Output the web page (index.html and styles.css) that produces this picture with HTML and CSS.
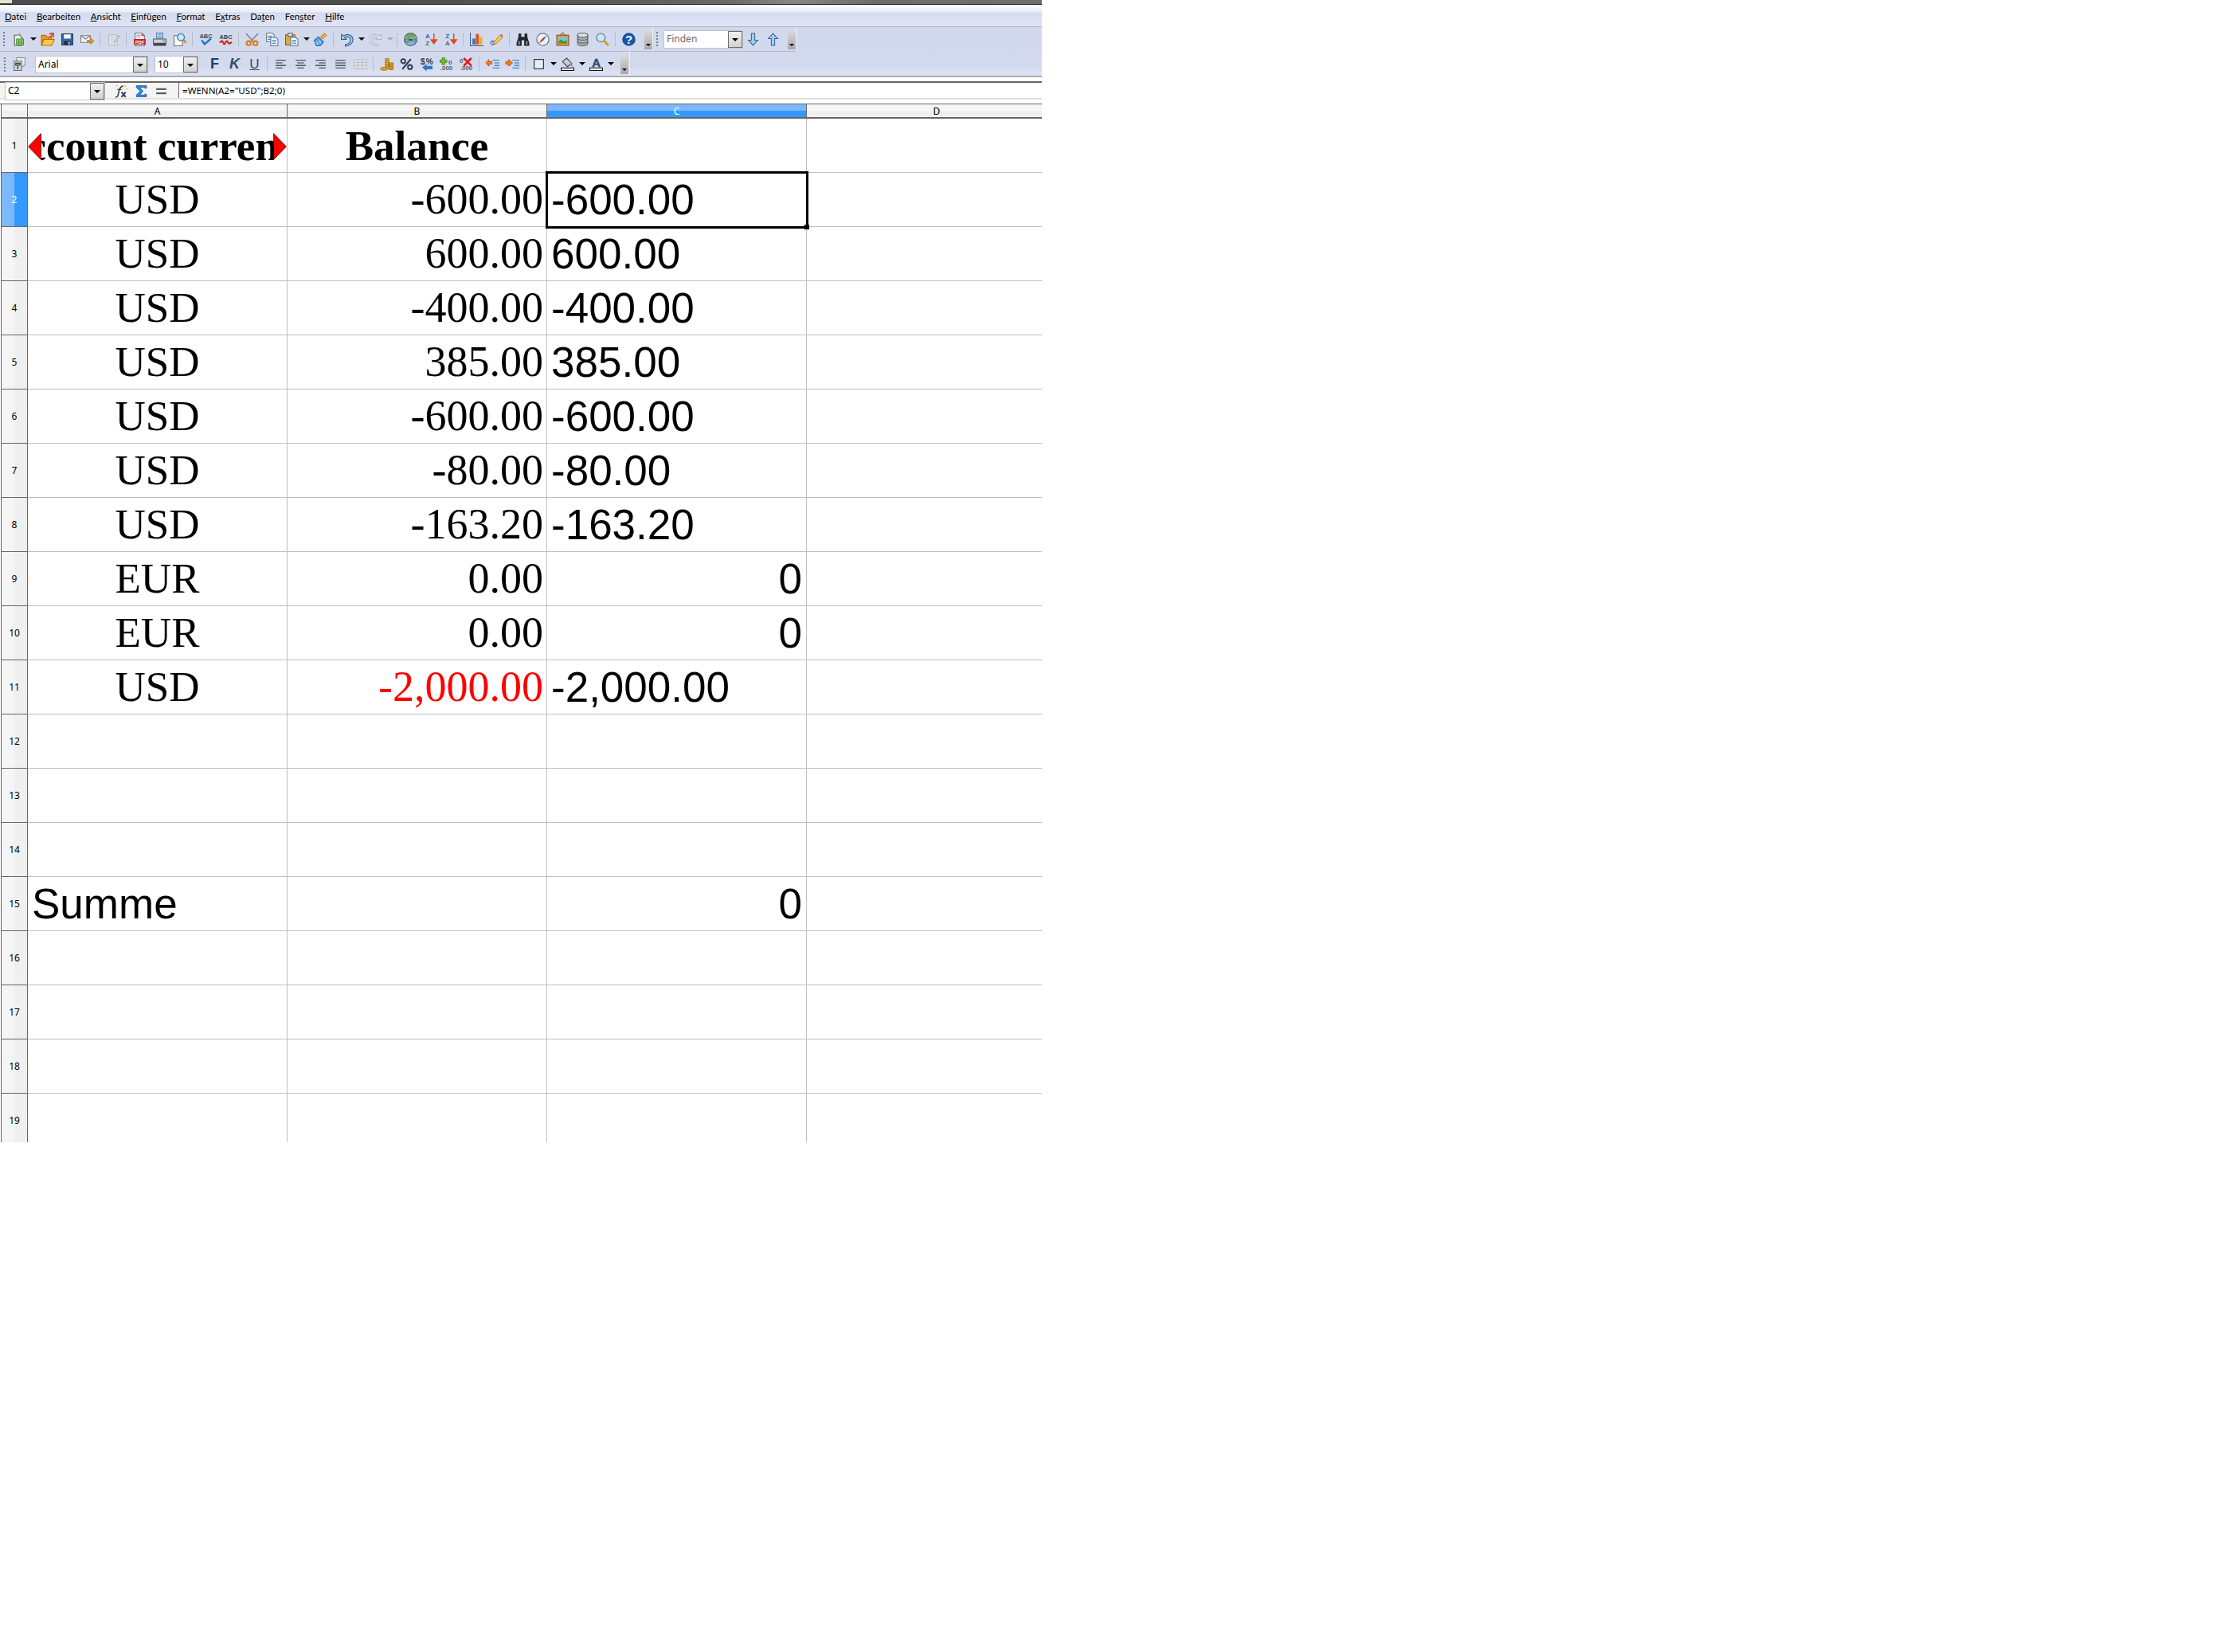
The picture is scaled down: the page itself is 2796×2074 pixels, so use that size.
FILE: index.html
```html
<!DOCTYPE html>
<html lang="de">
<head>
<meta charset="utf-8">
<title>Calc</title>
<link rel="stylesheet" href="styles.css">
</head>
<body>
<div class="app">
  <div class="titlebar"><span class="title-icon"></span></div>
  <div class="menu">
    <span><u>D</u>atei</span><span><u>B</u>earbeiten</span><span><u>A</u>nsicht</span><span><u>E</u>infügen</span><span><u>F</u>ormat</span><span>E<u>x</u>tras</span><span>Da<u>t</u>en</span><span>Fen<u>s</u>ter</span><span><u>H</u>ilfe</span>
  </div>
  <div class="toolbars">
    <div class="tb-row">
      <div class="tb-group">
        <i class="grip"></i>
        <b class="tool"><svg class="ic" viewBox="0 0 16 16"><path d="M3 3h6l3 3v9H3z" fill="#f2f2ee" stroke="#555"/><path d="M5.5 7.500h8v7h-8z" fill="#dff2b8" stroke="#2f8a1c"/><path d="M8.200 7.500v7M10.800 7.500v7M5.500 9.800h8M5.500 12.200h8" stroke="#2f8a1c" fill="none"/><path d="M4 3l5-2.500 3 1.500-5 2z" fill="#9fb59a"/></svg></b>
        <b class="drop"></b>
        <b class="tool"><svg class="ic" viewBox="0 0 16 16"><path d="M1 3h5l1 2h6v3H4l-3 7z" fill="#e89a20" stroke="#a8620e"/><path d="M4 8h12l-3 7H1z" fill="#fcc94e" stroke="#b06e10"/><path d="M9 6l4-4h-3l1-2h5v5l-2 1V3l-4 4z" fill="#e2502a"/></svg></b>
        <b class="tool"><svg class="ic" viewBox="0 0 16 16"><path d="M1.500 1.500h13v13h-13z" fill="#3a6a9e" stroke="#1d3a5c"/><path d="M4 2h8v5H4z" fill="#f4f7fb"/><path d="M4 10h8v4.500H4z" fill="#16304f"/><path d="M9 11h2v3H9z" fill="#b8c8da"/></svg></b>
        <b class="tool"><svg class="ic" viewBox="0 0 16 16"><path d="M.5 3.500h11v8H.5z" fill="#f6f6f6" stroke="#7a7a7a"/><path d="M.5 3.500l5.500 4 5.500-4" fill="none" stroke="#7a7a7a"/><path d="M8 9h4V6.500L16 10l-4 3.500V11H8z" fill="#f0a020" stroke="#a8620e" stroke-width=".7"/></svg></b>
        <i class="sep"></i>
        <b class="tool"><svg class="ic" viewBox="0 0 16 16"><path d="M2.500 2.500h8l2 2v10h-10z" fill="#e4e6ec" stroke="#b4b7c0"/><path d="M4.500 6h5M4.500 8.500h4M4.500 11h3" stroke="#c2c5cc"/><path d="M9 10l5-7 1.500 1-5 7-2 1z" fill="#d0d2d8" stroke="#b4b7c0"/></svg></b>
        <i class="sep"></i>
        <b class="tool"><svg class="ic" viewBox="0 0 16 16"><path d="M2.500.5h8l3 3v12h-11z" fill="#f4f6fa" stroke="#5f7796"/><path d="M10 .5l3.500 3.500H10z" fill="#d8402a"/><path d="M4 3h5M4 5h5" stroke="#8da0b8"/><rect x="1" y="7.500" width="14" height="6.500" fill="#c8201c"/><text x="8" y="13" class="ict pdf">PDF</text></svg></b>
        <b class="tool"><svg class="ic" viewBox="0 0 16 16"><path d="M4.500 .5h7v6h-7z" fill="#eef3f9" stroke="#2f6ca8"/><path d="M6 2.500h4M6 4.500h4" stroke="#2f6ca8"/><path d="M.5 7.500h15v5H.5z" fill="#cfd2d6" stroke="#55585c"/><path d="M.5 12.500h15v3H.5z" fill="#3c3f43"/><path d="M12 9h2v1.500h-2z" fill="#4cb02a"/></svg></b>
        <b class="tool"><svg class="ic" viewBox="0 0 16 16"><path d="M1.500 3.500h7l3 3v9h-10z" fill="#fbfbfb" stroke="#707070"/><circle cx="9.500" cy="5.500" r="4.200" fill="#cfe6f7" stroke="#3e7fb4" stroke-width="1.200"/><path d="M12.500 8.500l3 3.500" stroke="#c88a1e" stroke-width="2.400"/></svg></b>
        <i class="sep"></i>
        <b class="tool"><svg class="ic" viewBox="0 0 16 16"><text x="8" y="6.500" class="ict abc">ABC</text><path d="M3 9l3.500 4.500L14 7" fill="none" stroke="#2a78c8" stroke-width="2.400"/></svg></b>
        <b class="tool"><svg class="ic" viewBox="0 0 16 16"><text x="8" y="7.500" class="ict abc">ABC</text><path d="M1 12c2-3 3-3 4 0s2 1 3-1 2-1 3 1 3 0 4-1" fill="none" stroke="#d8201c" stroke-width="2"/></svg></b>
        <i class="sep"></i>
        <b class="tool"><svg class="ic" viewBox="0 0 16 16"><path d="M1 1l9 10M15 1L6 11" stroke="#8a8e94" stroke-width="1.600"/><circle cx="4" cy="12.500" r="2.500" fill="none" stroke="#e07a18" stroke-width="2"/><circle cx="12" cy="12.500" r="2.500" fill="none" stroke="#e07a18" stroke-width="2"/></svg></b>
        <b class="tool"><svg class="ic" viewBox="0 0 16 16"><path d="M1.500 .5h7l2 2v8h-9z" fill="#f6f8fb" stroke="#5f7796"/><path d="M3 4h5M3 6h5M3 8h5" stroke="#5f7796"/><path d="M6.500 5.500h6l2.500 2.500v7.500H6.500z" fill="#fff" stroke="#5f7796"/><path d="M8 9h5M8 11h5M8 13h5" stroke="#2a78c8"/></svg></b>
        <b class="tool"><svg class="ic" viewBox="0 0 16 16"><path d="M.5 2.500h11v12H.5z" fill="#e0a83a" stroke="#8a5f14"/><path d="M3.500 .5h5v4h-5z" fill="#d8dde4" stroke="#666"/><path d="M6.500 5.500h6l2.500 2.500v7.500H6.500z" fill="#fff" stroke="#5f7796"/><path d="M8 9h5M8 11h5M8 13h5" stroke="#2a78c8"/></svg></b>
        <b class="drop"></b>
        <b class="tool"><svg class="ic" viewBox="0 0 16 16"><path d="M.5 9l5-4 6 6-4 4.500H3z" fill="#5aa4e4" stroke="#2a68a8"/><path d="M3 11l2 3M6 9.500l2.500 3" stroke="#d8ecfc"/><path d="M8 5l4.500-4.500 2.500 2.500-4.500 4.500z" fill="#f0b030" stroke="#a8620e" stroke-width=".7"/></svg></b>
        <i class="sep"></i>
        <b class="tool"><svg class="ic" viewBox="0 0 16 16"><path d="M1.500 2v6h6L5.200 5.800c3-2 7-.6 7 2.700 0 2.800-2.600 5-6 5.500v2c5-.2 9-3.500 9-7.500 0-5.500-6.500-8-11-4.800z" fill="#a9c7e4" stroke="#2f5f90"/></svg></b>
        <b class="drop"></b>
        <b class="tool"><svg class="ic" viewBox="0 0 16 16"><path d="M14.500 2v6h-6l2.300-2.200c-3-2-7-.6-7 2.700 0 2.800 2.600 5 6 5.500v2c-5-.2-9-3.500-9-7.500 0-5.500 6.500-8 11-4.800z" fill="#e4e6ec" stroke="#b4b7c0"/></svg></b>
        <b class="drop off"></b>
        <i class="sep"></i>
        <b class="tool"><svg class="ic" viewBox="0 0 16 16"><circle cx="8" cy="8" r="7.500" fill="#7ab8d8" stroke="#4a5a5a"/><path d="M3 3c3-2 7-2 10 0l-1 3-3-1-2 2-3-1zM2 11l3-1 1 3z" fill="#6fa83a"/><path d="M2 8.500h5M9 8.500h5" stroke="#333" stroke-width="2.600"/><path d="M2.500 8.500h4M9.500 8.500h4" stroke="#e8e8e8" stroke-width="1.200"/><path d="M6 8.500h4" stroke="#333" stroke-width="1.400"/></svg></b>
        <b class="tool"><svg class="ic" viewBox="0 0 16 16"><text x="4.500" y="7" class="ict az blue">A</text><text x="4.500" y="15" class="ict az grey">Z</text><path d="M12 1v10M8.800 8.500l3.200 4.500 3.200-4.500z" fill="#e24a20" stroke="#e24a20" stroke-width="1.400"/></svg></b>
        <b class="tool"><svg class="ic" viewBox="0 0 16 16"><text x="4.500" y="7" class="ict az blue">Z</text><text x="4.500" y="15" class="ict az grey">A</text><path d="M12 1v10M8.800 8.500l3.200 4.500 3.200-4.500z" fill="#e24a20" stroke="#e24a20" stroke-width="1.400"/></svg></b>
        <i class="sep"></i>
        <b class="tool"><svg class="ic" viewBox="0 0 16 16"><path d="M.5 0v15.500H16" fill="none" stroke="#4a5a6a"/><rect x="3" y="7" width="3.500" height="7" fill="#2a78c8"/><rect x="7" y="1.500" width="3.500" height="12.500" fill="#e2501e"/><rect x="11" y="5" width="3.500" height="9" fill="#f0b020"/></svg></b>
        <b class="tool"><svg class="ic" viewBox="0 0 16 16"><path d="M1 13c0-3 3-4 4-2s-2 4-3.500 3" fill="none" stroke="#2a78c8" stroke-width="1.500"/><path d="M5 11l7-8 3 2.500-7.500 7.500-3.500 1z" fill="#f6d050" stroke="#a8620e" stroke-width=".8"/><path d="M12 3l1.500-1.500 2 2L15 5.500z" fill="#e0604a"/></svg></b>
        <i class="sep"></i>
        <b class="tool"><svg class="ic" viewBox="0 0 16 16"><path d="M3 1h3v4h4V1h3l.5 5 2 6v3.500H9.500V9h-3v6.500H.5V12l2-6z" fill="#24262a"/><path d="M2.500 10h2v4h-2zM11.500 10h2v4h-2z" fill="#8a8e94"/></svg></b>
        <b class="tool"><svg class="ic" viewBox="0 0 16 16"><circle cx="8" cy="8" r="7.200" fill="#eef2f6" stroke="#6a7a8a" stroke-width="1.200"/><path d="M13 3L7 7l2 2z" fill="#2a78c8"/><path d="M3 13l6-4-2-2z" fill="#e2301e"/></svg></b>
        <b class="tool"><svg class="ic" viewBox="0 0 16 16"><path d="M5 3l3-3 3 3" fill="none" stroke="#a8701e"/><rect x="1" y="3" width="14" height="12" fill="#e8a030" stroke="#8a4a10"/><rect x="3" y="5" width="10" height="8" fill="#7ac0e8"/><path d="M3 13v-3l3-2 3 2 4-1v4z" fill="#4a9a30"/></svg></b>
        <b class="tool"><svg class="ic" viewBox="0 0 16 16"><path d="M2 3v10c0 3.300 12 3.300 12 0V3z" fill="#b0b4b8" stroke="#5a5e62"/><ellipse cx="8" cy="3" rx="6" ry="2.500" fill="#e0e2e4" stroke="#5a5e62"/><path d="M2 6.500c0 3 12 3 12 0M2 10c0 3 12 3 12 0" fill="none" stroke="#5a5e62"/></svg></b>
        <b class="tool"><svg class="ic" viewBox="0 0 16 16"><circle cx="6" cy="6" r="5" fill="#cfe6f7" stroke="#5a7f9f" stroke-width="1.200"/><path d="M9.500 9.500l5.500 5.500" stroke="#d89a20" stroke-width="2.600"/></svg></b>
        <i class="sep"></i>
        <b class="tool"><svg class="ic" viewBox="0 0 16 16"><circle cx="8" cy="8" r="7.800" fill="#1c54a8"/><text x="8" y="12.800" class="ict help">?</text></svg></b>
        <i class="more"></i>
      </div>
      <div class="tb-group find">
        <i class="grip"></i>
        <div class="combo find-box"><span class="combo-text muted">Finden</span><b class="combo-btn"></b></div>
        <b class="tool"><svg class="ic" viewBox="0 0 16 16"><path d="M6 1h4v8h3.500L8 15 2.500 9H6z" fill="#a8cce8" stroke="#2f6a9a"/></svg></b>
        <b class="tool"><svg class="ic" viewBox="0 0 16 16"><path d="M6 15h4V7h3.500L8 1 2.500 7H6z" fill="#a8cce8" stroke="#2f6a9a"/></svg></b>
        <i class="more"></i>
      </div>
    </div>
    <div class="tb-row">
      <div class="tb-group second">
        <i class="grip"></i>
        <b class="tool"><svg class="ic" viewBox="0 0 16 16"><path d="M4.500 .5h10v8l-2 2h-8z" fill="#e8eaee" stroke="#8a8e94"/><path d="M1.500 4.500h9v11h-9z" fill="#d0d3d8" stroke="#6a6e74"/><path d="M3.500 7h5v2h-5zM6 9v5" fill="none" stroke="#34383e" stroke-width="1.200"/></svg></b>
        <div class="combo font-box"><span class="combo-text">Arial</span><b class="combo-btn"></b></div>
        <div class="combo size-box"><span class="combo-text">10</span><b class="combo-btn"></b></div>
        <b class="tool fmt fmt-b">F</b>
        <b class="tool fmt fmt-i">K</b>
        <b class="tool fmt fmt-u">U</b>
        <i class="sep"></i>
        <b class="tool"><svg class="ic" viewBox="0 0 16 16"><path d="M2 3.500h12M2 6.500h8M2 9.500h12M2 12.500h8" stroke="#30363e" fill="none"/></svg></b>
        <b class="tool"><svg class="ic" viewBox="0 0 16 16"><path d="M2 3.500h12M4 6.500h8M2 9.500h12M4 12.500h8" stroke="#30363e" fill="none"/></svg></b>
        <b class="tool"><svg class="ic" viewBox="0 0 16 16"><path d="M2 3.500h12M6 6.500h8M2 9.500h12M6 12.500h8" stroke="#30363e" fill="none"/></svg></b>
        <b class="tool"><svg class="ic" viewBox="0 0 16 16"><path d="M2 3.500h12M2 6.500h12M2 9.500h12M2 12.500h12" stroke="#30363e" fill="none"/></svg></b>
        <b class="tool"><svg class="ic" viewBox="0 0 16 16"><path d="M.5 2.500h15v11H.5zM.5 6h15M.5 9.500h15M5.500 2.500v11M10.500 2.500v11" fill="#e2e4ea" stroke="#bcbfc6"/></svg></b>
        <i class="sep"></i>
        <b class="tool"><svg class="ic" viewBox="0 0 16 16"><path d="M6.500 1.500h4v11h-4zM6.500 3.700h4M6.500 5.900h4M6.500 8.100h4M6.500 10.300h4" fill="#f0b838" stroke="#9a6510" stroke-width=".8"/><path d="M11 6.500h4.500v8H11zM11 8.500h4.500M11 10.500h4.500M11 12.500h4.500" fill="#e8a828" stroke="#9a6510" stroke-width=".8"/><ellipse cx="5" cy="13.500" rx="4.500" ry="1.800" fill="#e8a828" stroke="#9a6510" stroke-width=".8"/></svg></b>
        <b class="tool"><svg class="ic" viewBox="0 0 16 16"><path d="M13 2L3 14" stroke="#2a3a4a" stroke-width="2"/><circle cx="4" cy="4.500" r="2.500" fill="none" stroke="#2a3a4a" stroke-width="1.800"/><circle cx="12" cy="11.500" r="2.500" fill="none" stroke="#2a3a4a" stroke-width="1.800"/></svg></b>
        <b class="tool"><svg class="ic" viewBox="0 0 16 16"><text x="3.500" y="8" class="ict cur">$</text><text x="11.500" y="8" class="ict cur">%</text><path d="M15 10H8V7.500L3 12l5 4.500V14h7z" fill="#2a78c8"/></svg></b>
        <b class="tool"><svg class="ic" viewBox="0 0 16 16"><path d="M3 .5h3v2.500h2.500v3H6v2.500H3V6H.5V3H3z" fill="#6ec030" stroke="#2f7a14" stroke-width=".7"/><text x="12.500" y="8" class="ict dec blue">0</text><text x="8" y="15.500" class="ict dec grey">.000</text></svg></b>
        <b class="tool"><svg class="ic" viewBox="0 0 16 16"><text x="2" y="7" class="ict dec grey">0</text><text x="8" y="15.500" class="ict dec grey">.000</text><path d="M5 1l9 9M14 1l-9 9" stroke="#e0201c" stroke-width="2.600"/></svg></b>
        <i class="sep"></i>
        <b class="tool"><svg class="ic" viewBox="0 0 16 16"><path d="M7 5H3.500V2.500L0 6.500l3.500 4V8H7z" fill="#f08020" stroke="#c03010" stroke-width=".7"/><path d="M8 3.500h8M10 6.500h6M10 9.500h6M8 12.500h8" stroke="#1c78c8"/></svg></b>
        <b class="tool"><svg class="ic" viewBox="0 0 16 16"><path d="M0 5h3.500V2.500L8 6.500l-4.500 4V8H0z" fill="#f08020" stroke="#c03010" stroke-width=".7"/><path d="M8 3.500h8M10 6.500h6M10 9.500h6M8 12.500h8" stroke="#1c78c8"/></svg></b>
        <i class="sep"></i>
        <b class="tool"><svg class="ic" viewBox="0 0 16 16"><rect x="2.500" y="2.500" width="11" height="11" fill="#e6edf6" stroke="#20262c"/></svg></b>
        <b class="drop"></b>
        <b class="tool"><svg class="ic" viewBox="0 0 16 16"><path d="M2 5l5-4 6 6-5 4z" fill="#c8ccd2" stroke="#3a4048"/><path d="M10 3l3 3 1 5-2-1z" fill="#8a9098"/><rect x=".5" y="12.500" width="15" height="3" fill="#fff" stroke="#111"/></svg></b>
        <b class="drop"></b>
        <b class="tool"><svg class="ic" viewBox="0 0 16 16"><text x="8" y="11" class="ict fontc">A</text><rect x=".5" y="12.500" width="15" height="3" fill="#fff" stroke="#111"/></svg></b>
        <b class="drop"></b>
        <i class="more"></i>
      </div>
    </div>
  </div>
  <div class="formula">
    <div class="combo name-box"><span class="combo-text">C2</span><b class="combo-btn"></b></div>
    <span class="f-icon f-first"><svg class="ic" viewBox="0 0 16 16"><path d="M1 15c3 0 3-2 4-7 1-4 2-6 5-6" fill="none" stroke="#3a3e42" stroke-width="1.500"/><path d="M3 6h5" stroke="#3a3e42"/><path d="M8 9l5 6M13 9l-5 6" stroke="#1c3f6a" stroke-width="1.800"/><path d="M2 1l1 1M12 1l1 2M15 5l-1 1" stroke="#e8b828" stroke-width="1.400"/></svg></span>
    <span class="f-icon"><svg class="ic" viewBox="0 0 16 16"><path d="M2 1.500h12v3h-2V3.500H6l4 4.500-4 4.500h6v-1h2v3H2v-2l4.500-4.500L2 3.500z" fill="#2a88d8" stroke="#1a5a98" stroke-width=".7"/></svg></span>
    <span class="f-icon"><svg class="ic" viewBox="0 0 16 16"><path d="M2 5.500h12M2 10.500h12" stroke="#5a6068" stroke-width="2"/></svg></span>
    <div class="f-input">=WENN(A2="USD";B2;0)</div>
  </div>
  <div class="rule"></div>
  <div class="sheet">
    <div class="corner"></div><div class="colhead">A</div><div class="colhead">B</div><div class="colhead active">C</div><div class="colhead last">D</div>

    <div class="rowhead">1</div><div class="cell serif bold overflow"><span class="clip-text">Account currency</span><svg class="clip clip-l" viewBox="0 0 17 34"><path d="M16.500 .5v33L.5 17z"/></svg><svg class="clip clip-r" viewBox="0 0 17 34"><path d="M.5 .5v33L16.500 17z"/></svg></div><div class="cell serif bold center head-cell">Balance</div><div class="cell"></div><div class="cell last"></div>
    <div class="rowhead active">2</div><div class="cell serif center">USD</div><div class="cell serif right">-600.00</div><div class="cell sans current">-600.00<i class="handle"></i></div><div class="cell last"></div>
    <div class="rowhead">3</div><div class="cell serif center">USD</div><div class="cell serif right">600.00</div><div class="cell sans">600.00</div><div class="cell last"></div>
    <div class="rowhead">4</div><div class="cell serif center">USD</div><div class="cell serif right">-400.00</div><div class="cell sans">-400.00</div><div class="cell last"></div>
    <div class="rowhead">5</div><div class="cell serif center">USD</div><div class="cell serif right">385.00</div><div class="cell sans">385.00</div><div class="cell last"></div>
    <div class="rowhead">6</div><div class="cell serif center">USD</div><div class="cell serif right">-600.00</div><div class="cell sans">-600.00</div><div class="cell last"></div>
    <div class="rowhead">7</div><div class="cell serif center">USD</div><div class="cell serif right">-80.00</div><div class="cell sans">-80.00</div><div class="cell last"></div>
    <div class="rowhead">8</div><div class="cell serif center">USD</div><div class="cell serif right">-163.20</div><div class="cell sans">-163.20</div><div class="cell last"></div>
    <div class="rowhead">9</div><div class="cell serif center">EUR</div><div class="cell serif right">0.00</div><div class="cell sans right">0</div><div class="cell last"></div>
    <div class="rowhead">10</div><div class="cell serif center">EUR</div><div class="cell serif right">0.00</div><div class="cell sans right">0</div><div class="cell last"></div>
    <div class="rowhead">11</div><div class="cell serif center">USD</div><div class="cell serif right red">-2,000.00</div><div class="cell sans">-2,000.00</div><div class="cell last"></div>
    <div class="rowhead">12</div><div class="cell"></div><div class="cell"></div><div class="cell"></div><div class="cell last"></div>
    <div class="rowhead">13</div><div class="cell"></div><div class="cell"></div><div class="cell"></div><div class="cell last"></div>
    <div class="rowhead">14</div><div class="cell"></div><div class="cell"></div><div class="cell"></div><div class="cell last"></div>
    <div class="rowhead">15</div><div class="cell sans">Summe</div><div class="cell"></div><div class="cell sans right">0</div><div class="cell last"></div>
    <div class="rowhead">16</div><div class="cell"></div><div class="cell"></div><div class="cell"></div><div class="cell last"></div>
    <div class="rowhead">17</div><div class="cell"></div><div class="cell"></div><div class="cell"></div><div class="cell last"></div>
    <div class="rowhead">18</div><div class="cell"></div><div class="cell"></div><div class="cell"></div><div class="cell last"></div>
    <div class="rowhead">19</div><div class="cell"></div><div class="cell"></div><div class="cell"></div><div class="cell last"></div>
  </div>
</div>
</body>
</html>
```
FILE: styles.css
```css
html, body { margin: 0; padding: 0; background: #fff; }
.app { width: 1308px; height: 1434px; overflow: hidden; font-family: "Noto Sans", "Liberation Sans", sans-serif; color: #000; }

.titlebar { position: relative; height: 5px; background: linear-gradient(90deg, #4c4c4c 0, #4c4c4c 34%, #5a5a5a 58%, #6a6a6a 70%, #868686 76%, #6c6c6c 84%, #6e6e6e 100%); border-bottom: 1px solid #1e1e1e; }
.title-icon { position: absolute; left: 0; top: 0; width: 15px; height: 4px; background: #e6e3c8; }

.menu { height: 28px; box-sizing: border-box; border-bottom: 1px solid #b0b4c6; padding: 6px 0 0 6px; display: flex; gap: 12.700px; font-family: Lato, "Noto Sans", sans-serif; font-size: 11.500px; line-height: 17px; background: linear-gradient(180deg, #fff 0, #e9ecf6 9px, #d5dbee 10px, #dfe5f4 26px); }

.toolbars { height: 63px; box-sizing: border-box; background: linear-gradient(180deg, #d3d9ec 0, #d4daed 50px, #dfe4f3 61px); border-bottom: 2px solid #a9adb9; }
.tb-row { height: 30px; display: flex; }
.tb-row:last-child { height: 31px; }
.tb-group { height: 31px; box-sizing: border-box; display: flex; align-items: center; padding-left: 4px; border-right: 1px solid #eef0f6; border-bottom: 1px solid #b4b8c8; }
.tb-row:last-child .tb-group { border-bottom: 0; padding-top: 2px; padding-left: 5px; }
.find { width: 180px; }
.second { width: 791px; }
.grip { width: 2px; height: 18px; margin-right: 5px; flex: none; background: repeating-linear-gradient(180deg, #767d8e 0 2px, transparent 2px 4px); }
.tool { width: 25px; height: 25px; flex: none; display: flex; align-items: center; justify-content: center; font-weight: 400; }
.ic { width: 17px; height: 17px; display: block; overflow: visible; }
.sep { width: 1px; height: 17px; margin: 0 4px 0 3px; flex: none; background: #b5bac9; }
.drop { width: 11px; height: 25px; flex: none; position: relative; }
.drop::after { content: ""; position: absolute; left: 2px; top: 10px; border: 4px solid transparent; border-top: 4px solid #000; border-bottom: 0; }
.drop.off::after { border-top-color: #a4a7b0; }
.more { width: 10px; height: 25px; margin-left: 7px; flex: none; position: relative; background: linear-gradient(180deg, #dcdcdc, #a8a8a8); }
.more::after { content: ""; position: absolute; left: 2px; bottom: 4px; border: 3px solid transparent; border-top: 3px solid #000; border-bottom: 0; }
.find .more { margin-left: 6px; }

.combo { box-sizing: border-box; display: flex; align-items: stretch; background: #fff; border: 1px solid #c0c2c8; flex: none; }
.combo-text { flex: 1; padding-left: 3px; font-size: 12px; line-height: 20px; white-space: nowrap; }
.muted { color: #6a6a6a; }
.combo-btn { position: relative; width: 18px; box-sizing: border-box; border: 1px solid #6e6e6e; background: linear-gradient(180deg, #f0f0f0, #d2d2d2); flex: none; }
.combo-btn::after { content: ""; position: absolute; left: 4px; top: 8px; border: 4px solid transparent; border-top: 4px solid #000; border-bottom: 0; }
.font-box { width: 142px; height: 22px; margin-left: 7px; }
.size-box { width: 55px; height: 22px; margin: 0 8px; }
.find-box { width: 100px; height: 23px; margin-left: 2px; }
.name-box { width: 126px; height: 23px; margin: -1px 0 0 6px; position: relative; }

.fmt { font-family: "Liberation Sans", sans-serif; font-size: 17px; color: #1f3f5f; }
.fmt-b { font-weight: 700; font-size: 18px; }
.fmt-i { font-weight: 700; font-style: italic; font-size: 18px; color: #2f4f62; }
.fmt-u { text-decoration: underline; color: #2a4a66; }

.ict { font-family: "Liberation Sans", sans-serif; font-weight: 700; text-anchor: middle; fill: #2a3a4a; }
.pdf { font-size: 5.500px; fill: #fff; }
.abc { font-size: 7px; fill: #2a4a66; }
.az { font-size: 7.500px; }
.blue { fill: #1c68c0; }
.grey { fill: #5a6068; }
.help { font-size: 14px; fill: #fff; }
.cur { font-size: 9.500px; }
.dec { font-size: 7.500px; }
.fontc { font-size: 14px; fill: #2a5a88; stroke: #12304c; stroke-width: .4; }

.formula { height: 21px; box-sizing: border-box; display: flex; align-items: flex-start; background: #f4f4f4; margin-top: 5px; border-top: 2px solid #666; }
.f-icon { width: 25px; height: 21px; flex: none; display: flex; align-items: center; justify-content: center; }
.f-first { margin-left: 8px; }
.f-input { flex: 1; height: 19px; background: #fff; margin-left: 9px; border-left: 1px solid #666; padding-left: 4px; font-size: 11.600px; line-height: 20px; white-space: nowrap; }
.rule { height: 7px; box-sizing: border-box; background: #fff; border-top: 2px solid #e2e2e2; }

.sheet { display: grid; grid-template-columns: 34px 326px 326px 326px 295px; grid-template-rows: 18px; grid-auto-rows: 68px; padding-left: 1px; border-top: 1px solid #666; }
.corner, .colhead { box-sizing: border-box; border-bottom: 2px solid #666; background: linear-gradient(180deg, #f6f6f6 50%, #efefef 50%); }
.corner { border-left: 1px solid #666; border-right: 1px solid #666; }
.colhead { border-right: 1px solid #666; text-align: center; font-size: 12px; line-height: 17px; }
.colhead.last { border-right: 0; padding-left: 31px; }
.colhead.active { background: linear-gradient(180deg, #7db8ff 50%, #3399ff 50%); color: #fff; }
.rowhead { box-sizing: border-box; border-left: 1px solid #666; border-right: 1px solid #666; border-bottom: 1px solid #666; background: linear-gradient(90deg, #f5f5f5 50%, #efefef 50%); display: flex; align-items: center; justify-content: center; font-size: 12px; }
.rowhead.active { background: linear-gradient(90deg, #7db8ff 50%, #3399ff 50%); color: #fff; }
.cell { box-sizing: border-box; position: relative; border-right: 1px solid #c0c0c0; border-bottom: 1px solid #c0c0c0; font-size: 53px; display: flex; align-items: center; padding: 0 4px 1px; white-space: nowrap; }
.cell.last { border-right: 0; }
.serif { font-family: "Liberation Serif", serif; }
.sans { font-family: "Liberation Sans", sans-serif; padding-left: 5px; padding-right: 5px; }
.bold { font-weight: 700; }
.center { justify-content: center; }
.right { justify-content: flex-end; }
.serif.right { font-size: 54px; }
.red { color: #ff0000; }
.overflow { padding: 1px 0 0; }
.head-cell { padding-top: 1px; padding-bottom: 0; }
.clip-text { flex: 1; min-width: 0; margin: 0 16px 0 17px; display: flex; justify-content: center; overflow: hidden; }
.clip { position: absolute; top: 18px; width: 17px; height: 34px; fill: #ff0000; stroke: #000; stroke-width: .6; }
.clip-l { left: 0; }
.clip-r { right: 0; }
.current { outline: 3px solid #000; outline-offset: -1px; z-index: 2; }
.handle { position: absolute; right: -4px; bottom: -4px; width: 6px; height: 6px; background: #000; }
```
